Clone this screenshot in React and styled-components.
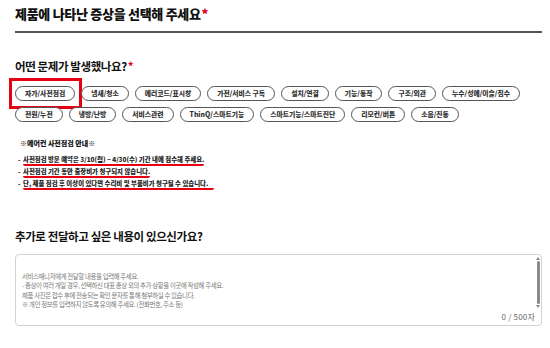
import styled, { createGlobalStyle } from "styled-components";

const GlobalStyle = createGlobalStyle`
  body {
    margin: 0;
    background: #fff;
    font-family: "Noto Sans CJK KR", "Noto Sans", sans-serif;
    color: #222;
  }
`;

const symptoms = [
  "자가/사전점검",
  "냄새/청소",
  "에러코드/표시창",
  "가전/서비스 구독",
  "설치/연결",
  "기능/동작",
  "구조/외관",
  "누수/성에/이슬/침수",
  "전원/누전",
  "냉방/난방",
  "서비스관련",
  "ThinQ/스마트기능",
  "스마트기능/스마트진단",
  "리모컨/버튼",
  "소음/진동",
];

const notices = [
  { text: "사전점검 방문 예약은 3/10(월) ~ 4/30(수) 기간 내에 접수해 주세요.", extra: 0 },
  { text: "사전점검 기간 동안 출장비가 청구되지 않습니다.", extra: 0 },
  { text: "단, 제품 점검 후 이상이 있다면 수리비 및 부품비가 청구될 수 있습니다.", extra: 6 },
];

const placeholder = [
  "서비스매니저에게 전달할 내용을 입력해 주세요.",
  "- 증상이 여러 개일 경우, 선택하신 대표 증상 외의 추가 상황을 이곳에 작성해 주세요.",
  "제품 사진은 접수 후에 전송되는 확인 문자를 통해 첨부하실 수 있습니다.",
  "※ 개인 정보를 입력하지 않도록 유의해 주세요. (전화번호, 주소 등)",
].join("\n");

export default function App() {
  return (
    <Page>
      <GlobalStyle />
      <Title>
        제품에 나타난 증상을 선택해 주세요<Star>*</Star>
      </Title>

      <SubTitle>
        어떤 문제가 발생했나요?<Star>*</Star>
      </SubTitle>
      <ChipList>
        {symptoms.map((s, i) => (
          <Chip key={s} $marked={i === 0}>
            {s}
          </Chip>
        ))}
      </ChipList>

      <NoticeTitle>※에어컨 사전점검 안내※</NoticeTitle>
      <NoticeList>
        {notices.map((n) => (
          <NoticeItem key={n.text}>
            <Dash>-</Dash>
            <Marked $extra={n.extra}>{n.text}</Marked>
          </NoticeItem>
        ))}
      </NoticeList>

      <SubTitle $top={37}>추가로 전달하고 싶은 내용이 있으신가요?</SubTitle>
      <Box>
        <Memo placeholder={placeholder} />
        <Scroll>
          <Arrow viewBox="0 0 4 3">
            <path d="M0 3 L2 0 L4 3 Z" fill="#888" />
          </Arrow>
          <Thumb />
          <Arrow viewBox="0 0 4 3">
            <path d="M0 0 L2 3 L4 0 Z" fill="#888" />
          </Arrow>
        </Scroll>
        <Count>0 / 500자</Count>
      </Box>
    </Page>
  );
}

const Page = styled.main`
  width: 527px;
  padding: 4px 0 0 15px;
`;

const Title = styled.h1`
  margin: 0;
  font-size: 13px;
  line-height: 20px;
  font-weight: 900;
  letter-spacing: -0.3px;
  color: #111;
  padding-bottom: 7px;
  border-bottom: 2px solid #555;
`;

const Star = styled.span`
  color: #e4002b;
  margin-left: 1px;
`;

const SubTitle = styled.h2`
  margin: ${(p) => p.$top ?? 25}px 0 0;
  font-size: 11.5px;
  line-height: 16px;
  font-weight: 700;
  letter-spacing: -0.4px;
  color: #111;
`;

const ChipList = styled.div`
  display: flex;
  flex-wrap: wrap;
  gap: 6px 6px;
  margin-top: 12px;
  width: 527px;
`;

const Chip = styled.button`
  position: relative;
  height: 15px;
  padding: 0 9px;
  border: 1px solid #555;
  border-radius: 8px;
  background: #fff;
  font-family: inherit;
  font-size: 6.8px;
  font-weight: 900;
  line-height: 13px;
  color: #333;
  white-space: nowrap;

  &::after {
    content: "";
    display: ${(p) => (p.$marked ? "block" : "none")};
    position: absolute;
    top: -9px;
    bottom: -9px;
    left: -7px;
    right: -8px;
    border: 3px solid #e60012;
  }
`;

const NoticeTitle = styled.p`
  margin: 16px 0 0 5px;
  font-size: 7px;
  line-height: 10px;
  font-weight: 900;
  color: #111;
`;

const NoticeList = styled.ul`
  list-style: none;
  margin: 7px 0 0 3px;
  padding: 0;
`;

const NoticeItem = styled.li`
  display: flex;
  height: 12px;
  font-size: 6.4px;
  line-height: 9px;
  font-weight: 900;
  color: #222;
`;

const Dash = styled.span`
  width: 5px;
`;

const Marked = styled.span`
  display: inline-block;
  height: 9px;
  padding-right: ${(p) => p.$extra}px;
  border-bottom: 2.5px solid #e60012;
  border-radius: 2px;
`;

const Box = styled.div`
  position: relative;
  margin-top: 10px;
  height: 72px;
`;

const Memo = styled.textarea`
  display: block;
  box-sizing: border-box;
  width: 100%;
  height: 100%;
  margin: 0;
  padding: 17px 12px 0 6px;
  border: 1.5px solid #d2d2d2;
  border-radius: 4px;
  resize: none;
  overflow: hidden;
  font-family: inherit;
  font-size: 6.4px;
  letter-spacing: -0.35px;
  line-height: 9.3px;
  color: #333;

  &::placeholder {
    color: #777;
  }
`;

const Scroll = styled.div`
  position: absolute;
  top: 3px;
  right: 2px;
  width: 4px;
  height: 51px;
  display: flex;
  flex-direction: column;
  align-items: center;
  gap: 1px;
`;

const Arrow = styled.svg`
  width: 4px;
  height: 3px;
  flex: none;
`;

const Thumb = styled.div`
  flex: 1;
  width: 3px;
  border-radius: 2px;
  background: #8a8a8a;
`;

const Count = styled.span`
  position: absolute;
  right: 7px;
  bottom: 5px;
  font-size: 8px;
  letter-spacing: 0.2px;
  line-height: 9px;
  color: #666;
`;
